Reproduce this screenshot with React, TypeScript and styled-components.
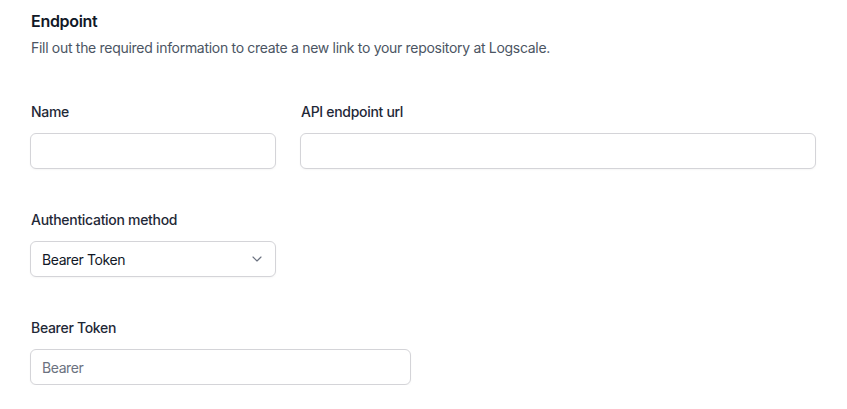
import React from "react";
import styled, { createGlobalStyle } from "styled-components";
import { ChevronDown } from "lucide-react";

const Global = createGlobalStyle`
  * { box-sizing: border-box; }
  html, body { margin: 0; padding: 0; background: #ffffff; }
  body {
    font-family: Inter, "Noto Sans", sans-serif;
    letter-spacing: -0.3px;
    -webkit-font-smoothing: antialiased;
  }
`;

const Page = styled.div`
  padding: 9px 31px 0 30px;
  width: 847px;
`;

const Header = styled.header`
  display: flex;
  flex-direction: column;
  gap: 5px;
  padding-left: 1px;
`;

const Title = styled.h2`
  margin: 0;
  font-size: 16px;
  line-height: 24px;
  font-weight: 600;
  color: #111827;
`;

const Subtitle = styled.p`
  margin: 0;
  font-size: 14px;
  line-height: 20px;
  color: #4b5563;
`;

const Form = styled.div`
  display: grid;
  grid-template-columns: repeat(6, 111px);
  column-gap: 24px;
  row-gap: 41px;
  margin-top: 44px;
`;

const Field = styled.div<{ $span: number }>`
  grid-column: span ${(p) => p.$span};
  display: flex;
  flex-direction: column;
  gap: 11px;
`;

const Label = styled.label`
  font-size: 14px;
  line-height: 20px;
  font-weight: 500;
  color: #1f2937;
  padding-left: 1px;
`;

const InputWrap = styled.div<{ $width?: number }>`
  width: ${(p) => (p.$width ? `${p.$width}px` : "100%")};
`;

const Input = styled.input`
  display: block;
  height: 36px;
  width: 100%;
  border: 1px solid #d4d4d8;
  border-radius: 6px;
  padding: 0 12px 0 11px;
  font-family: inherit;
  letter-spacing: -0.4px;
  font-size: 14px;
  color: #111827;
  background: #fff;
  box-shadow: 0 1px 2px rgba(0, 0, 0, 0.04);
  outline: none;
  &::placeholder { color: #6b7280; }
`;

const SelectBox = styled.div`
  height: 36px;
  width: 100%;
  border: 1px solid #d4d4d8;
  border-radius: 6px;
  padding: 0 10px 0 11px;
  display: flex;
  align-items: center;
  justify-content: space-between;
  font-size: 14px;
  letter-spacing: -0.4px;
  color: #111827;
  background: #fff;
  box-shadow: 0 1px 2px rgba(0, 0, 0, 0.04);
`;

const Chevron = styled(ChevronDown)`
  color: #6b7280;
`;

export default function App() {
  return (
    <>
      <Global />
      <Page>
        <Header>
          <Title>Endpoint</Title>
          <Subtitle>Fill out the required information to create a new link to your repository at Logscale.</Subtitle>
        </Header>
        <Form>
          <Field $span={2}>
            <Label>Name</Label>
            <Input />
          </Field>
          <Field $span={4}>
            <Label>API endpoint url</Label>
            <Input />
          </Field>
          <Field $span={6}>
            <Label>Authentication method</Label>
            <InputWrap $width={246}>
              <SelectBox>
                <span>Bearer Token</span>
                <Chevron size={16} strokeWidth={1.75} />
              </SelectBox>
            </InputWrap>
          </Field>
          <Field $span={6}>
            <Label>Bearer Token</Label>
            <InputWrap $width={381}>
              <Input placeholder="Bearer" />
            </InputWrap>
          </Field>
        </Form>
      </Page>
    </>
  );
}
